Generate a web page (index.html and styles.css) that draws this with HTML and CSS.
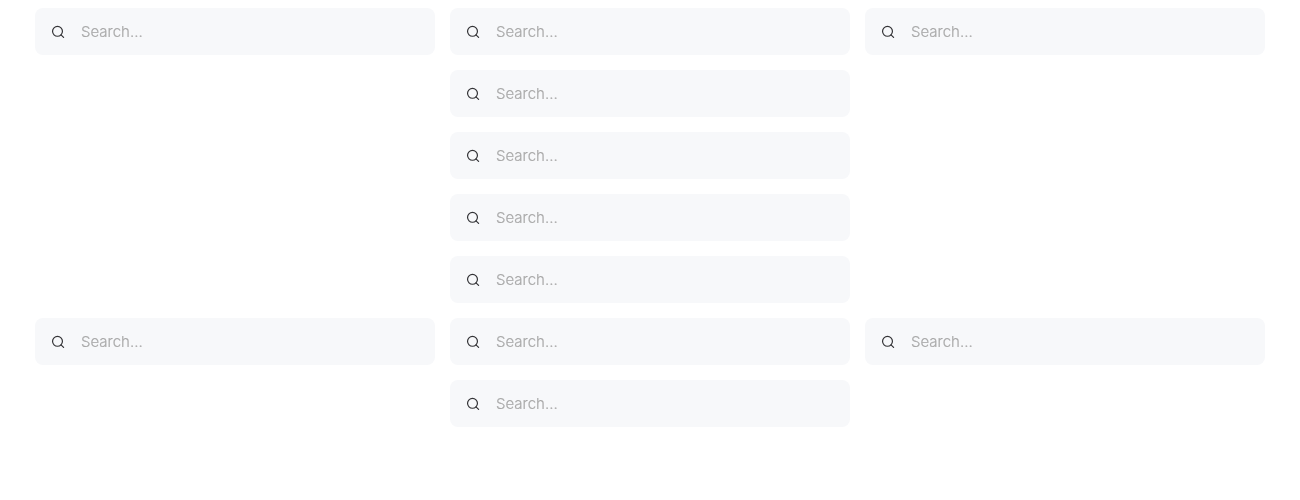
FILE: index.html
```html
<!DOCTYPE html>
<html lang="en">
<head>
<meta charset="utf-8">
<title>Search</title>
<link rel="stylesheet" href="styles.css">
</head>
<body>
<svg width="0" height="0" class="defs"><symbol id="search" viewBox="0 0 16 16"><circle cx="7.5" cy="7.3" r="4.95"/><path d="M11 10.8 13.6 13.4"/></symbol></svg>
<main class="row">
<label class="search"><svg class="icon"><use href="#search"/></svg><span class="hint">Search...</span></label>
<label class="search"><svg class="icon"><use href="#search"/></svg><span class="hint">Search...</span></label>
<label class="search"><svg class="icon"><use href="#search"/></svg><span class="hint">Search...</span></label>
<label class="search middle"><svg class="icon"><use href="#search"/></svg><span class="hint">Search...</span></label>
<label class="search middle"><svg class="icon"><use href="#search"/></svg><span class="hint">Search...</span></label>
<label class="search middle"><svg class="icon"><use href="#search"/></svg><span class="hint">Search...</span></label>
<label class="search middle"><svg class="icon"><use href="#search"/></svg><span class="hint">Search...</span></label>
<label class="search first"><svg class="icon"><use href="#search"/></svg><span class="hint">Search...</span></label>
<label class="search"><svg class="icon"><use href="#search"/></svg><span class="hint">Search...</span></label>
<label class="search"><svg class="icon"><use href="#search"/></svg><span class="hint">Search...</span></label>
<label class="search middle"><svg class="icon"><use href="#search"/></svg><span class="hint">Search...</span></label>
</main>
</body>
</html>
```

FILE: styles.css
```css
body { margin: 8px; background: #fff; font-family: Inter, sans-serif; }
.defs { display: none; }
.row { display: grid; grid-template-columns: repeat(3, 400px); gap: 15px; justify-content: center; }
.search { display: flex; align-items: center; box-sizing: border-box; height: 47px; padding: 0 15px; gap: 15px; border-radius: 8px; background: #f7f8fa; }
.first { grid-column: 1; }
.middle { grid-column: 2; }
.icon { width: 16px; height: 16px; fill: none; stroke: #333336; stroke-width: 1.2; stroke-linecap: round; }
.hint { font-size: 15px; font-weight: 300; line-height: 18px; color: #a9a9a9; -webkit-text-stroke: 0.2px #a9a9a9; will-change: transform; }
```
